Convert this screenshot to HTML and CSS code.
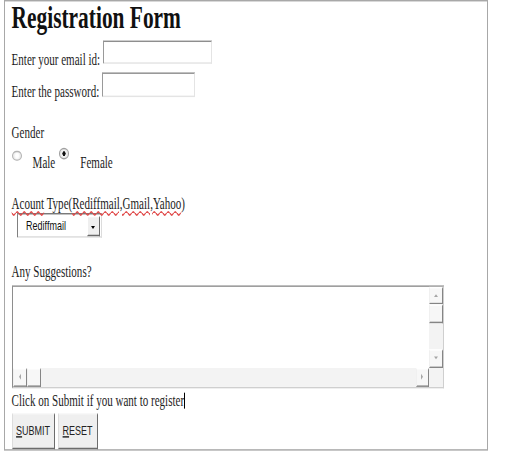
FILE: index.html
```html
<!DOCTYPE html>
<html>
<head>
<meta charset="utf-8">
<title>Registration Form</title>
<link rel="stylesheet" href="styles.css">
</head>
<body>
<div class="page">
  <form class="box">
    <h1 class="title">Registration Form</h1>
    <div class="row">
      <label class="lbl" for="email">Enter your email id:&nbsp;</label>
      <input class="txt email" id="email" type="text">
    </div>
    <div class="row row2">
      <label class="lbl" for="pw">Enter the password:&nbsp;</label>
      <input class="txt pw" id="pw" type="password">
    </div>

    <div class="line gender">Gender</div>
    <div class="radios">
      <input class="radio male" type="radio" name="g" id="m">
      <label class="rlbl" for="m">Male</label>
      <input class="radio female" type="radio" name="g" id="f" checked>
      <label class="rlbl" for="f">Female</label>
    </div>

    <div class="line acct"><span class="spell">Acount</span> Type(<span class="spell">Rediffmail,Gmail,Yahoo</span>)</div>
    <div class="sel">
      <select class="sel-field">
        <option>Rediffmail</option>
        <option>Gmail</option>
        <option>Yahoo</option>
      </select>
      <span class="sel-btn"><span class="tri-down"></span></span>
    </div>

    <div class="line sugg">Any Suggestions?</div>
    <div class="ta">
      <textarea class="ta-field"></textarea>
      <div class="vbar">
        <span class="sb-btn up"><span class="arr arr-up"></span></span>
        <span class="sb-btn vthumb"></span>
        <span class="track"></span>
        <span class="sb-btn down"><span class="arr arr-down"></span></span>
      </div>
      <div class="hbar">
        <span class="sb-btn left"><span class="arr arr-left"></span></span>
        <span class="sb-btn hthumb"></span>
        <span class="track"></span>
        <span class="sb-btn right"><span class="arr arr-right"></span></span>
      </div>
      <div class="corner"></div>
    </div>

    <div class="line click">Click on Submit if you want to register<span class="caret"></span></div>
    <div class="btns">
      <button class="btn submit" type="submit"><u>S</u>UBMIT</button>
      <button class="btn reset" type="reset"><u>R</u>ESET</button>
    </div>
  </form>
</div>
</body>
</html>
```
FILE: styles.css
```css
/* The reference is a horizontally squeezed capture: the page is laid out
   at its real width with narrow text, then stretched vertically. */
html {
  overflow: hidden;
  background: #ffffff;
}

body {
  margin: 0;
  padding: 0;
  min-height: 458px;
}

.page {
  width: 505px;
  transform: scaleY(1.449);
  transform-origin: 0 0;
  font-family: "Liberation Serif", "Times New Roman", serif;
  color: #1e1e1e;
}

.box {
  margin: 0 0 0 4px;
  width: 484px;
  height: 311.2px;
  box-sizing: border-box;
  border: 1px solid #a8a8a8;
  border-width: 0.7px 1.4px 0.7px 1.4px;
  padding: 0 0 0 6.6px;
}

.title {
  margin: 0.7px 0 5.5px;
  font-size: 21.4px;
  line-height: 20.7px;
  font-weight: bold;
  color: #111;
}

.row {
  display: flex;
  align-items: flex-end;
  height: 19.32px;
}

.row2 {
  margin-top: 2.76px;
}

.lbl {
  font-size: 11.04px;
  line-height: 11.04px;
  white-space: nowrap;
}

.txt {
  box-sizing: border-box;
  width: 109px;
  height: 16.56px;
  margin: 0 0 2.76px;
  padding: 0 2px;
  border-style: solid;
  border-width: 1.38px 1px 0.7px 1.4px;
  border-color: #8e8e8e #e4e4e4 #e4e4e4 #9a9a9a;
  background: #fff;
  outline: none;
}

.pw {
  width: 93px;
  height: 17.25px;
  margin-bottom: 2.07px;
}

.line {
  font-size: 11.04px;
  line-height: 11.04px;
  white-space: nowrap;
}

.gender { margin-top: 16.56px; }

.radios {
  display: flex;
  align-items: flex-start;
  margin-top: 5.52px;
  height: 15.87px;
}

.radio {
  appearance: none;
  -webkit-appearance: none;
  box-sizing: border-box;
  width: 10px;
  height: 7.6px;
  margin: 0;
  border: 0.7px solid #b4b4b4;
  border-radius: 50%;
  background: radial-gradient(circle at 50% 50%, #ffffff 30%, #e8e8e8 75%);
}

.male { margin-top: 1.38px; }
.female { margin-left: 4px; }

.radio:checked {
  background: radial-gradient(circle at 50% 50%, #111 0, #111 28%, #f4f4f4 36%, #e2e2e2 78%);
  border-color: #a0a0a0;
}

.rlbl {
  margin-left: 11px;
  padding-top: 4.83px;
  font-size: 11.04px;
  line-height: 11.04px;
}

.acct { margin-top: 16.56px; }

.spell {
  text-decoration: underline wavy #e04848;
  text-decoration-thickness: 0.7px;
  text-underline-offset: 1.4px;
}

.sel {
  display: flex;
  box-sizing: border-box;
  width: 85px;
  height: 17.25px;
  margin: 1.38px 0 0 5px;
  border-style: solid;
  border-width: 1.38px 0.7px 0.7px 1.4px;
  border-color: #7a7a7a #dcdcdc #dcdcdc #808080;
  background: #fff;
}

.sel-field {
  appearance: none;
  -webkit-appearance: none;
  flex: 1;
  min-width: 0;
  border: none;
  background: transparent;
  padding: 0 0 0 8.5px;
  font-family: "Liberation Sans", Arial, sans-serif;
  font-size: 9px;
  color: #111;
  outline: none;
}

.sel-btn {
  display: flex;
  align-items: center;
  justify-content: center;
  box-sizing: border-box;
  width: 13px;
  margin: 0.7px 0.7px 0.7px 0;
  background: #efefef;
  border-style: solid;
  border-width: 0.7px 1.4px 1.38px 0.7px;
  border-color: #ffffff #6a6a6a #6a6a6a #ffffff;
}

.tri-down {
  width: 0;
  height: 0;
  border-left: 2.8px solid transparent;
  border-right: 2.8px solid transparent;
  border-top: 2.76px solid #000;
  margin-top: 1.38px;
}

.sugg { margin-top: 17.94px; }

.ta {
  display: grid;
  grid-template-columns: 1fr 14px;
  grid-template-rows: 1fr 13.11px;
  box-sizing: border-box;
  width: 432px;
  height: 71.08px;
  margin-top: 3.45px;
  border-style: solid;
  border-width: 1.38px 0.7px 0.7px 1.4px;
  border-color: #8a8a8a #cfcfcf #cfcfcf #8e8e8e;
  background: #fff;
}

.ta-field {
  border: none;
  resize: none;
  outline: none;
  margin: 0;
  padding: 1px;
  overflow: hidden;
  background: #fff;
}

.vbar {
  display: flex;
  flex-direction: column;
  background: #f3f3f3;
}

.hbar {
  display: flex;
  background: #f3f3f3;
}

.corner {
  background: #f3f3f3;
}

.track {
  flex: 1;
}

.sb-btn {
  display: flex;
  align-items: center;
  justify-content: center;
  box-sizing: border-box;
  background: #f7f7f7;
  border-style: solid;
  border-width: 0.7px 1.4px 1.38px 0.7px;
  border-color: #ffffff #858585 #858585 #f0f0f0;
}

.vbar .sb-btn { height: 13.11px; }
.vbar .up { height: 12.42px; }

.hbar .sb-btn { width: 14px; }
.hbar .right { width: 12.5px; }

.arr {
  width: 0;
  height: 0;
}

.arr-up {
  border-left: 2.8px solid transparent;
  border-right: 2.8px solid transparent;
  border-bottom: 2.76px solid #a6a6a6;
}

.arr-down {
  border-left: 2.8px solid transparent;
  border-right: 2.8px solid transparent;
  border-top: 2.76px solid #a6a6a6;
}

.arr-left {
  border-top: 2.76px solid transparent;
  border-bottom: 2.76px solid transparent;
  border-right: 2.8px solid #a6a6a6;
}

.arr-right {
  border-top: 2.76px solid transparent;
  border-bottom: 2.76px solid transparent;
  border-left: 2.8px solid #a6a6a6;
}

.click { margin-top: 2.76px; }

.caret {
  display: inline-block;
  width: 0;
  height: 10.35px;
  border-left: 1.4px solid #000;
  vertical-align: -2.07px;
}

.btns {
  display: flex;
  gap: 3px;
  margin-top: 2.76px;
}

.btn {
  box-sizing: border-box;
  height: 25.53px;
  padding: 0;
  background: #efefef;
  border-style: solid;
  border-width: 0.7px 1.4px 1.38px 0.7px;
  border-color: #f8f8f8 #6c6c6c #6c6c6c #dcdcdc;
  font-family: "Liberation Sans", Arial, sans-serif;
  font-size: 9px;
  color: #222;
}

.submit { width: 43px; }
.reset { width: 40px; }

.btn u {
  text-underline-offset: 1.4px;
}
```
